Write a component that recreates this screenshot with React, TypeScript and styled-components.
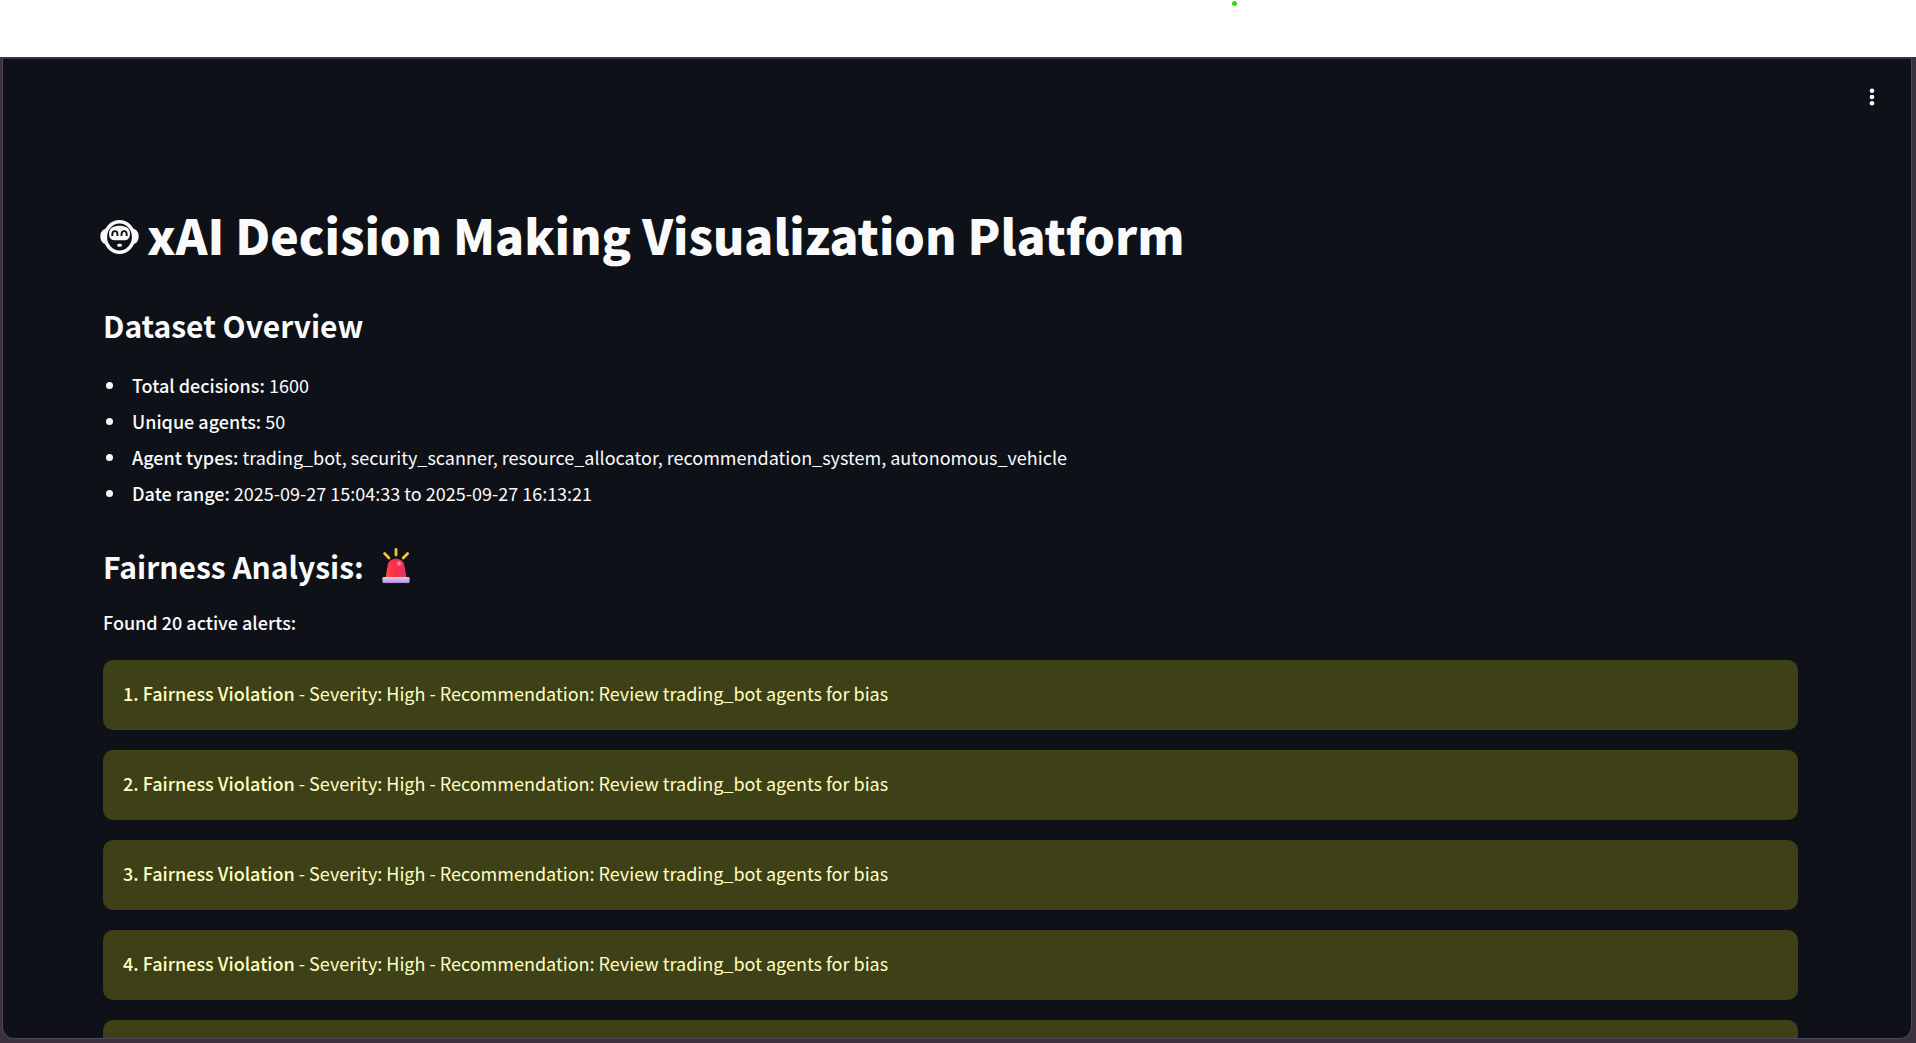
import React from "react";
import styled, { createGlobalStyle } from "styled-components";

const GlobalStyle = createGlobalStyle`
  *, *::before, *::after { box-sizing: border-box; }
  html, body { margin: 0; padding: 0; background: #3b323e; }
  body { font-family: "Noto Sans CJK SC", "Noto Sans", sans-serif; }
`;

const Page = styled.div`
  display: flex;
  flex-direction: column;
  height: 100vh;
  overflow: hidden;
  background: #3b323e;
`;

const TopStrip = styled.div`
  flex: none;
  height: 57px;
  background: #ffffff;
  position: relative;
`;

const RecordingDot = styled.span`
  position: absolute;
  top: 1px;
  left: calc(64.4% - 2px);
  width: 5px;
  height: 5px;
  border-radius: 50%;
  background: #2bdc0a;
`;

const Frame = styled.div`
  flex: 1;
  min-height: 0;
  display: flex;
  padding: 0 4px 4px 2px;
`;

const AppWindow = styled.div`
  flex: 1;
  min-width: 0;
  display: flex;
  flex-direction: column;
  overflow: hidden;
  background: #0e1117;
  border: 1px solid #52445a;
  border-top: 2px solid #36363a;
  border-radius: 0 0 12px 12px;
`;

const Toolbar = styled.header`
  flex: none;
  display: flex;
  justify-content: flex-end;
  align-items: center;
  height: 75px;
  padding: 0 23px;
`;

const MenuButton = styled.button`
  display: flex;
  align-items: center;
  justify-content: center;
  width: 32px;
  height: 32px;
  padding: 0;
  border: 0;
  border-radius: 8px;
  background: transparent;
  color: #fafafa;
  cursor: pointer;
`;

const Main = styled.main`
  flex: 1;
  min-height: 0;
  padding: 68px 113px 0 100px;
  color: #fafafa;
  font-size: 18px;
  line-height: 32px;
  overflow: hidden;
`;

const Title = styled.h1`
  display: flex;
  align-items: center;
  gap: 8px;
  margin: 0 0 37px -3px;
  font-size: 48px;
  line-height: 64px;
  font-weight: 900;
`;

const Heading = styled.h2`
  display: flex;
  align-items: center;
  gap: 18px;
  margin: 0;
  font-size: 30px;
  line-height: 44px;
  font-weight: 700;
`;

const FactList = styled.ul`
  display: flex;
  flex-direction: column;
  gap: 4px;
  margin: 22px 0 35px;
  padding: 0;
  list-style: none;
`;

const Fact = styled.li`
  display: flex;
  align-items: center;
  padding-left: 3px;

  &::before {
    content: "";
    width: 7px;
    height: 7px;
    margin-right: 19px;
    border-radius: 50%;
    background: currentColor;
  }
`;

const Label = styled.strong`
  font-weight: 500;
`;

const AlertCount = styled.p`
  margin: 18px 0 22px;
`;

const AlertList = styled.div`
  display: flex;
  flex-direction: column;
  gap: 20px;
`;

const Alert = styled.div`
  flex: none;
  padding: 17px 20px 21px;
  border-radius: 10px;
  background: #3e4017;
  color: #ffffc2;
`;

const facts = [
  { label: "Total decisions:", value: "1600" },
  { label: "Unique agents:", value: "50" },
  {
    label: "Agent types:",
    value: "trading_bot, security_scanner, resource_allocator, recommendation_system, autonomous_vehicle",
  },
  { label: "Date range:", value: "2025-09-27 15:04:33 to 2025-09-27 16:13:21" },
];

const alerts = [1, 2, 3, 4, 5];

const RobotIcon = () => (
  <svg width="39" height="42" viewBox="0 -6 39 42" aria-hidden="true">
    <ellipse cx="19.5" cy="18" rx="16" ry="17" fill="#fafafa" />
    <rect x="0.4" y="9.5" width="38.2" height="16" rx="7" fill="#fafafa" />
    <ellipse cx="19.5" cy="18" rx="12.4" ry="13.4" fill="#0e1117" />
    <path
      d="M19.5 6.8C25 6.8 30 9 30 14.5C30 19.5 27.5 21.3 24 21.3H15C11.5 21.3 9 19.5 9 14.5C9 9 14 6.8 19.5 6.8Z"
      fill="#fafafa"
    />
    <path
      d="M12.3 17V15.4C12.3 11 17.5 11 17.5 15.4V17M21.5 17V15.4C21.5 11 26.7 11 26.7 15.4V17"
      fill="none"
      stroke="#0e1117"
      strokeWidth="1.9"
    />
    <rect x="17.3" y="24.8" width="4.6" height="3" rx="1.4" fill="#fafafa" />
  </svg>
);

const SirenIcon = () => (
  <svg width="28" height="36" viewBox="0 0 28 36" aria-hidden="true">
    <defs>
      <linearGradient id="dome" x1="0" x2="1" y1="0.6" y2="0.4">
        <stop offset="0" stopColor="#ff4a42" />
        <stop offset="0.45" stopColor="#fb2c4c" />
        <stop offset="1" stopColor="#d93a6c" />
      </linearGradient>
      <linearGradient id="base" x1="0" x2="0" y1="0" y2="1">
        <stop offset="0" stopColor="#d9cdea" />
        <stop offset="1" stopColor="#b99be0" />
      </linearGradient>
      <radialGradient id="shine">
        <stop offset="0" stopColor="#ffb9c6" />
        <stop offset="1" stopColor="#f5587a" stopOpacity="0" />
      </radialGradient>
    </defs>
    <path
      d="M14 1.5V7M2.6 5.5L7 10M25.6 5.5L21.2 10"
      stroke="#f5c13d"
      strokeWidth="2.8"
      strokeLinecap="round"
    />
    <path d="M3.6 29.5L5.6 17.5C7 8.6 21 8.6 22.4 17.5L24.4 29.5Z" fill="url(#dome)" />
    <ellipse cx="17.2" cy="15.5" rx="3.6" ry="3.6" fill="url(#shine)" />
    <rect x="0.5" y="29" width="27" height="6" rx="1.2" fill="url(#base)" />
    <path d="M1 34.6H27" stroke="#a884dc" strokeWidth="0.8" />
  </svg>
);

export default function App() {
  return (
    <Page>
      <GlobalStyle />
      <TopStrip>
        <RecordingDot />
      </TopStrip>
      <Frame>
        <AppWindow>
          <Toolbar>
            <MenuButton type="button" aria-label="Main menu">
              <svg width="6" height="18" viewBox="0 0 6 18" fill="currentColor" aria-hidden="true">
                <circle cx="3" cy="2.7" r="2.3" />
                <circle cx="3" cy="9" r="2.3" />
                <circle cx="3" cy="15.3" r="2.3" />
              </svg>
            </MenuButton>
          </Toolbar>
          <Main>
            <Title>
              <RobotIcon />
              xAI Decision Making Visualization Platform
            </Title>
            <Heading>Dataset Overview</Heading>
            <FactList>
              {facts.map((fact) => (
                <Fact key={fact.label}>
                  <span>
                    <Label>{fact.label}</Label> {fact.value}
                  </span>
                </Fact>
              ))}
            </FactList>
            <Heading>
              Fairness Analysis: <SirenIcon />
            </Heading>
            <AlertCount>
              <Label>Found 20 active alerts:</Label>
            </AlertCount>
            <AlertList>
              {alerts.map((n) => (
                <Alert key={n} role="alert">
                  <Label>{n}. Fairness Violation</Label> - Severity: High - Recommendation: Review
                  trading_bot agents for bias
                </Alert>
              ))}
            </AlertList>
          </Main>
        </AppWindow>
      </Frame>
    </Page>
  );
}
